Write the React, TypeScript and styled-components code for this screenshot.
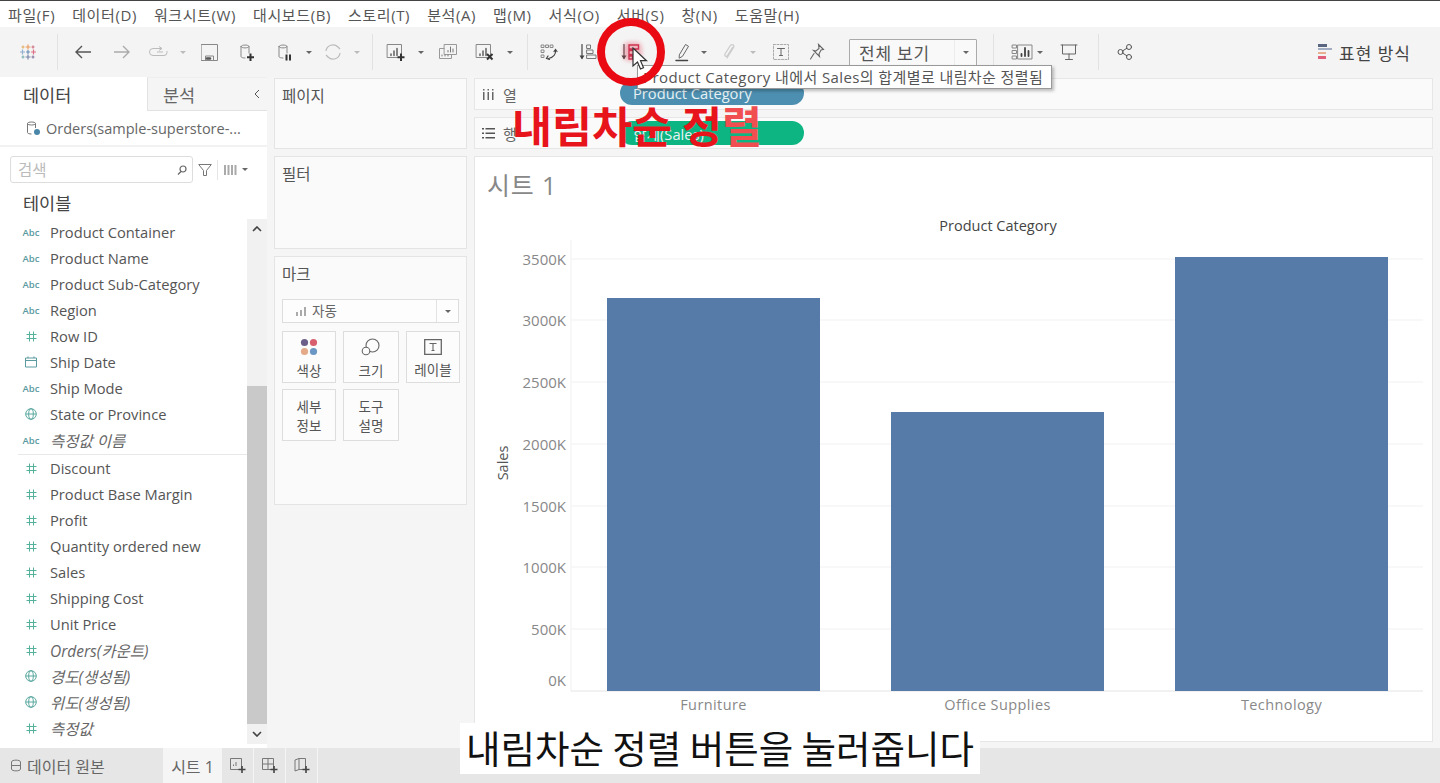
import React from "react";
import styled, { createGlobalStyle } from "styled-components";

const FONT = `"Open Sans", "Noto Sans CJK KR", sans-serif`;

const GlobalStyle = createGlobalStyle`
  html, body { margin: 0; padding: 0; background: #f5f5f5; }
  body { font-family: ${FONT}; color: #555; overflow: hidden; }
  * { box-sizing: border-box; }
`;

const Page = styled.div`
  position: relative;
  width: 1440px;
  height: 783px;
  display: flex;
  flex-direction: column;
  border-top: 1px solid #444;
  overflow: hidden;
`;

/* ---- menu + toolbar ---- */
const MenuBar = styled.div`
  height: 26px;
  background: #fff;
  display: flex;
  align-items: center;
  gap: 17px;
  padding-left: 8px;
  font-size: 15px;
  letter-spacing: 0.6px;
  color: #555;
`;

const Toolbar = styled.div`
  height: 50px;
  background: #f4f4f4;
  display: flex;
  align-items: center;
  padding-left: 8px;
`;

const Tool = styled.div<{ $w: number; $ml?: number }>`
  width: ${(p) => p.$w}px;
  margin-left: ${(p) => p.$ml ?? 0}px;
  flex: none;
  display: flex;
  align-items: center;
  justify-content: center;
`;

const ToolSep = styled.div<{ $ml: number; $mr: number }>`
  width: 1px;
  height: 36px;
  flex: none;
  background: #e2e2e2;
  margin: 0 ${(p) => p.$mr}px 0 ${(p) => p.$ml}px;
`;

const Caret = styled.span<{ $light?: boolean }>`
  width: 0;
  height: 0;
  border-left: 3px solid transparent;
  border-right: 3px solid transparent;
  border-top: 3px solid ${(p) => (p.$light ? "#bbb" : "#666")};
`;

const FitSelect = styled.div`
  width: 128px;
  height: 27px;
  margin-left: 21px;
  flex: none;
  border: 1px solid #aaa;
  border-radius: 1px;
  background: #f9f9f9;
  display: flex;
  align-items: center;
  font-size: 17px;
  letter-spacing: 0.8px;
  color: #555;
  padding-left: 9px;
`;

const FitCaret = styled.div`
  margin-left: auto;
  width: 22px;
  height: 100%;
  border-left: 1px solid #ececec;
  display: flex;
  align-items: center;
  justify-content: center;
`;

const ShowMe = styled.div`
  margin-left: auto;
  margin-right: 29px;
  display: flex;
  align-items: center;
  gap: 7px;
  font-size: 17px;
  letter-spacing: 1px;
  color: #444;
`;

/* ---- body ---- */
const Body = styled.div`
  flex: 1;
  min-height: 0;
  display: flex;
  background: #f5f5f5;
`;

const DataPane = styled.div`
  width: 267px;
  flex: none;
  background: #fff;
  display: flex;
  flex-direction: column;
`;

const PaneTabs = styled.div`
  height: 34px;
  flex: none;
  display: flex;
`;

const PaneTab = styled.div<{ $active?: boolean }>`
  width: ${(p) => (p.$active ? 147 : 120)}px;
  display: flex;
  align-items: center;
  font-size: 17.5px;
  color: ${(p) => (p.$active ? "#444" : "#666")};
  padding-left: ${(p) => (p.$active ? 23 : 15)}px;
  background: ${(p) => (p.$active ? "#fff" : "#f5f5f5")};
  border-bottom: ${(p) => (p.$active ? "none" : "1px solid #e2e2e2")};
  border-left: ${(p) => (p.$active ? "none" : "1px solid #e2e2e2")};
  border-top: ${(p) => (p.$active ? "none" : "1px solid #eee")};
  justify-content: space-between;
  padding-right: 7px;
`;

const SourceRow = styled.div`
  height: 36px;
  flex: none;
  display: flex;
  align-items: center;
  gap: 5px;
  padding-left: 26px;
  font-size: 14.5px;
  color: #666;
  border-bottom: 2px solid #f2f2f2;
`;

const SearchRow = styled.div`
  flex: none;
  display: flex;
  align-items: center;
  padding: 9px 0 0 10px;
`;

const SearchBox = styled.div`
  width: 183px;
  height: 27px;
  border: 1px solid #ddd;
  border-radius: 3px;
  display: flex;
  align-items: center;
  justify-content: space-between;
  padding: 0 5px 0 7px;
  font-size: 15.5px;
  color: #bbb;
`;

const SearchTools = styled.div`
  display: flex;
  align-items: center;
  margin-left: 5px;
  gap: 5px;
`;

const ThinSep = styled.div`
  width: 1px;
  height: 20px;
  background: #e5e5e5;
`;

const TablesTitle = styled.div`
  flex: none;
  height: 36px;
  display: flex;
  align-items: center;
  padding: 3px 0 0 23px;
  font-size: 17.5px;
  color: #444;
`;

const FieldArea = styled.div`
  flex: 1;
  min-height: 0;
  display: flex;
`;

const FieldList = styled.div`
  flex: 1;
`;

const FieldRow = styled.div<{ $divided?: boolean }>`
  position: relative;
  height: ${(p) => (p.$divided ? 28 : 26)}px;
  display: flex;
  align-items: center;
  padding-left: 24px;
  padding-bottom: ${(p) => (p.$divided ? 2 : 0)}px;
  font-size: 14.7px;
  color: #555;
  ${(p) =>
    p.$divided &&
    `&::after {
      content: "";
      position: absolute;
      left: 18px;
      right: 0;
      bottom: 0;
      height: 1px;
      background: #e8e8e8;
    }`}
`;

const FieldIcon = styled.span`
  width: 14px;
  margin-right: 12px;
  flex: none;
  display: flex;
  justify-content: center;
  font-size: 9.5px;
  font-weight: 600;
  color: #5b9aa0;
`;

const FieldName = styled.span<{ $italic?: boolean }>`
  font-style: ${(p) => (p.$italic ? "italic" : "normal")};
  font-size: ${(p) => (p.$italic ? "15.5px" : "inherit")};
  color: ${(p) => (p.$italic ? "#666" : "inherit")};
`;

const Scrollbar = styled.div`
  width: 20px;
  flex: none;
  height: 525px;
  background: #f1f1f1;
  display: flex;
  flex-direction: column;
  align-items: center;
`;

const ScrollThumb = styled.div`
  width: 100%;
  height: 340px;
  margin-top: 147px;
  background: #c9c9c9;
`;

const ScrollArrow = styled.div<{ $down?: boolean }>`
  height: 20px;
  flex: none;
  display: flex;
  align-items: center;
  justify-content: center;
  margin-top: ${(p) => (p.$down ? "auto" : "0")};
  transform: ${(p) => (p.$down ? "rotate(180deg)" : "none")};
`;

const CardColumn = styled.div`
  width: 193px;
  margin: 1px 0 0 7px;
  flex: none;
  display: flex;
  flex-direction: column;
  gap: 7px;
`;

const Card = styled.div<{ $h: number }>`
  height: ${(p) => p.$h}px;
  background: #fafafa;
  border: 1px solid #e4e4e4;
  padding: 6px 7px 0;
  font-size: 15.5px;
  line-height: 22px;
  color: #555;
`;

const MarkSelect = styled.div`
  margin-top: 14px;
  height: 24px;
  border: 1px solid #ddd;
  background: #fdfdfd;
  display: flex;
  align-items: center;
  font-size: 13.5px;
  color: #666;
  padding-left: 13px;
  gap: 6px;
`;

const MarkCaret = styled.div`
  margin-left: auto;
  width: 22px;
  height: 100%;
  border-left: 1px solid #e2e2e2;
  display: flex;
  align-items: center;
  justify-content: center;
`;

const MarkGrid = styled.div`
  margin-top: 8px;
  display: grid;
  grid-template-columns: 54px 56px 54px;
  grid-auto-rows: 52px;
  gap: 6px 7px;
`;

const MarkButton = styled.div`
  border: 1px solid #ddd;
  background: #fcfcfc;
  display: flex;
  flex-direction: column;
  align-items: center;
  justify-content: center;
  text-align: center;
  font-size: 13.5px;
  line-height: 19px;
  color: #555;
  gap: 6px;
  padding-top: 4px;
`;

const ViewColumn = styled.div`
  width: 959px;
  margin: 1px 0 0 7px;
  flex: none;
  display: flex;
  flex-direction: column;
  gap: 7px;
`;

const Shelf = styled.div`
  height: 32px;
  flex: none;
  background: #fafafa;
  border: 1px solid #e6e6e6;
  display: flex;
  align-items: center;
  font-size: 15px;
  color: #666;
`;

const ShelfLabel = styled.div`
  width: 145px;
  height: 100%;
  flex: none;
  padding-left: 7px;
  display: flex;
  align-items: center;
  gap: 8px;
`;

const Pill = styled.div<{ $color: string; $lift?: boolean }>`
  width: 184px;
  height: 24px;
  margin-top: ${(p) => (p.$lift ? "-2px" : "0")};
  border-radius: 12px;
  background: ${(p) => p.$color};
  color: #e8f2f5;
  font-size: 14.7px;
  display: flex;
  align-items: center;
  padding-left: 13px;
`;

const ViewCard = styled.div`
  flex: none;
  height: 586px;
  background: #fff;
  border: 1px solid #e6e6e6;
  padding: 13px 0 0 12px;
`;

const SheetTitle = styled.div`
  font-size: 25px;
  line-height: 30px;
  letter-spacing: 0.8px;
  color: #888;
`;

const ChartSvg = styled.svg`
  display: block;
  margin: 11px 0 0 -12px;
`;

/* ---- bottom tabs ---- */
const StatusBar = styled.div`
  height: 35px;
  flex: none;
  background: #e6e6e6;
  display: flex;
  align-items: stretch;
  font-size: 16px;
  color: #666;
`;

const SourceTab = styled.div`
  width: 163px;
  flex: none;
  display: flex;
  align-items: center;
  gap: 5px;
  padding-left: 10px;
`;

const SheetTab = styled.div`
  width: 59px;
  flex: none;
  background: #f5f5f5;
  display: flex;
  align-items: center;
  justify-content: center;
  font-size: 16px;
`;

const AddTab = styled.div`
  width: 32px;
  flex: none;
  border-right: 1px solid #f4f4f4;
  display: flex;
  align-items: center;
  justify-content: center;
`;

/* ---- things lying over the screen ---- */
const Tooltip = styled.div`
  position: absolute;
  left: 637px;
  top: 64px;
  width: 415px;
  height: 24px;
  background: #fff;
  border: 1px solid #999;
  box-shadow: 2px 2px 3px rgba(0, 0, 0, 0.25);
  font-size: 15px;
  letter-spacing: 0.4px;
  color: #555;
  white-space: nowrap;
  display: flex;
  align-items: center;
  padding: 0 0 2px 5px;
`;

const RedCircle = styled.div`
  position: absolute;
  left: 597px;
  top: 17px;
  width: 68px;
  height: 68px;
  border-radius: 50%;
  border: 8px solid #ea0a14;
`;

const Glow = styled.div`
  position: absolute;
  left: 623px;
  top: 41px;
  width: 19px;
  height: 19px;
  border-radius: 6px;
  background: rgba(225, 60, 90, 0.35);
  filter: blur(2px);
`;

const CursorSvg = styled.svg`
  position: absolute;
  left: 632px;
  top: 46px;
`;

const RedHeading = styled.div`
  position: absolute;
  left: 512px;
  top: 94px;
  font-family: "Noto Sans CJK KR", sans-serif;
  font-weight: 700;
  font-size: 43.5px;
  line-height: 60px;
  color: #e8141c;
  white-space: nowrap;
  span {
    color: #f04e50;
  }
`;

const Caption = styled.div`
  position: absolute;
  left: 460px;
  top: 722px;
  width: 520px;
  height: 51px;
  background: #fff;
  color: #111;
  font-family: "Noto Sans CJK KR", sans-serif;
  font-weight: 400;
  font-size: 37.5px;
  line-height: 48px;
  text-align: center;
  white-space: nowrap;
`;

/* ---- icons ---- */
const Ico = ({ w = 20, h = 20, children }: { w?: number; h?: number; children: React.ReactNode }) => (
  <svg width={w} height={h} viewBox={`0 0 ${w} ${h}`} fill="none" stroke="#666" strokeWidth="1" strokeLinecap="round">
    {children}
  </svg>
);

const TableauLogo = () => (
  <svg width="18" height="18" viewBox="0 0 18 18" strokeWidth="1.2" opacity="0.8">
    <path d="M9 1.5v5M6.5 4h5" stroke="#e8863a" />
    <path d="M9 11.5v5M6.5 14h5" stroke="#5a6b99" />
    <path d="M3.5 6.5v5M1 9h5" stroke="#7b9fc6" />
    <path d="M14.5 6.5v5M12 9h5" stroke="#d8506a" />
    <path d="M9 7v4M7 9h4" stroke="#4a7aa8" />
    <path d="M4 2.5v3M2.5 4h3" stroke="#e0a040" />
    <path d="M14 2.5v3M12.5 4h3" stroke="#c8506a" />
    <path d="M4 12.5v3M2.5 14h3" stroke="#5aa0a0" />
    <path d="M14 12.5v3M12.5 14h3" stroke="#6a5a90" />
  </svg>
);

const ArrowIcon = ({ dir, light }: { dir: "left" | "right"; light?: boolean }) => (
  <svg width="18" height="14" viewBox="0 0 18 14" fill="none" stroke={light ? "#aaa" : "#555"} strokeWidth="1.4">
    {dir === "left" ? <path d="M17 7H2M8 1L2 7l6 6" /> : <path d="M1 7h15M10 1l6 6-6 6" />}
  </svg>
);

const SaveIcon = () => (
  <Ico w={17} h={17}>
    <path d="M.5.5h16v16H.5zM4.5 16.5V12h8v4.5" stroke="#888" />
    <path d="M6 14.5h3" stroke="#555" strokeWidth="2.5" />
  </Ico>
);

const DbPlus = ({ pause }: { pause?: boolean }) => (
  <Ico w={18} h={20}>
    <path d="M2 4.5C2 2.5 10 2.5 10 4.5V11M2 4.5C2 6.5 10 6.5 10 4.5M2 4.5V14.5C2 15.5 4 16 6 16" stroke="#888" />
    {pause ? (
      <path d="M9.5 12.5v6M13 12.5v6" stroke="#333" strokeWidth="2" strokeLinecap="butt" />
    ) : (
      <path d="M11.5 11.500v7.500M8 15.200h7" stroke="#333" strokeWidth="2" strokeLinecap="butt" />
    )}
  </Ico>
);

const SheetIcon = ({ mark }: { mark?: "plus" | "x" }) => (
  <Ico w={20} h={20}>
    <path d="M1.5 2.5h14v13h-14z" stroke="#888" />
    <path d="M5 12v1.5M8 9v4.500M11 6.500v7" stroke="#555" strokeWidth="1.4" />
    {mark === "plus" && <path d="M15 11.500v7.500M11.500 15.200h7" stroke="#333" strokeWidth="2" strokeLinecap="butt" />}
    {mark === "x" && <path d="M12 12l5.500 5.500M17.500 12L12 17.500" stroke="#333" strokeWidth="2" strokeLinecap="butt" />}
  </Ico>
);

const DupSheetIcon = () => (
  <Ico w={20} h={18}>
    <path d="M6.500 1.500h12v10h-12z" stroke="#999" />
    <path d="M6 5.500H1.500v10h12V12" stroke="#999" />
    <path d="M10 9V7.500M12.500 9V4M15 9V6M4 13v-1M7 13v-1M10 13v-1" stroke="#777" />
  </Ico>
);

const SwapIcon = () => (
  <Ico w={18} h={18}>
    <path d="M1.500 2h2.500v2.500H1.500zM6 2h2.500v2.500H6zM10.500 2h2.500v2.500h-2.500zM1.500 7h2.500v2.500H1.500zM1.500 12h2.500v2.500H1.500z" stroke="#888" />
    <path d="M15.500 7c.5 4-2 7.500-7 8.500M8 13l-1.500 2.500 3 1M14 8.500l1.500-2 1.500 2" stroke="#444" strokeWidth="1.2" />
  </Ico>
);

const SortIcon = ({ desc }: { desc?: boolean }) => (
  <Ico w={20} h={18}>
    <path d="M4 1.500V15" stroke="#444" strokeWidth="1.2" />
    <path d="M1.500 12.500h5L4 16.500z" fill="#444" stroke="none" />
    {desc ? (
      <g stroke="#c22c48" strokeWidth="1.4">
        <path d="M9 2h9.500v4H9zM9 7.500h6.500v4H9zM9 13h3.500v3H9z" />
      </g>
    ) : (
      <path d="M9 2h3.500v3.500H9zM9 7h6v3.500H9zM9 12h9v3.500H9z" stroke="#777" />
    )}
  </Ico>
);

const PenIcon = () => (
  <Ico w={16} h={20}>
    <path d="M4.500 12.500l6-10 3 1.800-6 10L4.500 16z" stroke="#666" />
    <path d="M1 18.500h11.500" stroke="#444" strokeWidth="1.5" />
  </Ico>
);

const ClipIcon = () => (
  <Ico w={14} h={18}>
    <path d="M4 15L10.500 4.500c1.500-2.500-2-4-3.500-1.500L2 11c-1 2 1.500 3.500 2.500 1.500l5-8" stroke="#ccc" strokeWidth="1.3" />
  </Ico>
);

const TextIcon = () => (
  <Ico w={18} h={18}>
    <path d="M1.500 1.500h15v15h-15z" stroke="#aaa" strokeDasharray="2 1.5" />
    <path d="M5.500 5.500h7M9 5.500v7M7.500 12.500h3" stroke="#666" />
  </Ico>
);

const PinIcon = () => (
  <Ico w={16} h={18}>
    <path d="M9.500 1.500l5 5-2.500.5-2 4 .5 2.500-6-6 2.500.5 3-2.500zM5 10.500L1.500 16" stroke="#666" strokeWidth="1.1" />
  </Ico>
);

const SmallMultiples = () => (
  <Ico w={22} h={18}>
    <path d="M1.500 2h4v3h-4zM1.500 7.500h4v3h-4zM1.500 13h4v3h-4z" stroke="#888" />
    <path d="M7 2h14v14H7z" stroke="#888" />
    <path d="M10.500 13v-2M14 13V5M17.500 13V8" stroke="#444" strokeWidth="1.8" />
  </Ico>
);

const PresentIcon = () => (
  <Ico w={18} h={18}>
    <path d="M1 2h16M2.500 2v9h13V2M9 11v5M5.500 16.500h7" stroke="#666" />
  </Ico>
);

const ShareIcon = () => (
  <Ico w={16} h={16}>
    <circle cx="3.500" cy="8" r="2.500" stroke="#555" />
    <circle cx="12" cy="3" r="2.500" stroke="#555" />
    <circle cx="12" cy="13" r="2.500" stroke="#555" />
    <path d="M5.800 6.800l4-2.500M5.800 9.200l4 2.500" stroke="#555" />
  </Ico>
);

const ShowMeIcon = () => (
  <svg width="14" height="18" viewBox="0 0 14 18">
    <rect x="0" y="1" width="9" height="3" fill="#5a6680" />
    <rect x="0" y="5" width="14" height="2" fill="#a4aec2" />
    <rect x="0" y="9" width="8" height="2" fill="#e8b090" />
    <rect x="0" y="13" width="8" height="3" fill="#e0607a" />
  </svg>
);

const HashIcon = ({ color = "#55b09e" }: { color?: string }) => (
  <svg width="11" height="11" viewBox="0 0 11 11" fill="none" stroke={color} strokeWidth="1">
    <path d="M3.500.5v10M7.500.5v10M.5 3.500h10M.5 7.500h10" />
  </svg>
);

const GlobeIcon = () => (
  <svg width="12" height="12" viewBox="0 0 12 12" fill="none" stroke="#5aa8a0" strokeWidth="1">
    <circle cx="6" cy="6" r="5.300" />
    <ellipse cx="6" cy="6" rx="2.300" ry="5.300" />
    <path d="M.7 6h10.600" />
  </svg>
);

const CalendarIcon = () => (
  <svg width="12" height="12" viewBox="0 0 12 12" fill="none" stroke="#5b9aa0" strokeWidth="1">
    <path d="M.5 2h11v9h-11zM.5 4.500h11M3 .5V2M9 .5V2" />
  </svg>
);

const Chevron = () => (
  <svg width="10" height="6" viewBox="0 0 10 6" fill="none" stroke="#444" strokeWidth="1.6">
    <path d="M1 5l4-4 4 4" />
  </svg>
);

const MarkDots = () => (
  <svg width="18" height="18" viewBox="0 0 18 18">
    <circle cx="4.500" cy="4.500" r="3.600" fill="#6b5f8a" />
    <circle cx="13.500" cy="4.500" r="3.600" fill="#d8606e" />
    <circle cx="4.500" cy="13.500" r="3.600" fill="#e3a988" />
    <circle cx="13.500" cy="13.500" r="3.600" fill="#6a97c4" />
  </svg>
);

const MarkSize = () => (
  <svg width="20" height="18" viewBox="0 0 20 18" fill="none" stroke="#666" strokeWidth="1.1">
    <circle cx="11.500" cy="7.500" r="6.500" fill="#fcfcfc" />
    <circle cx="5" cy="13" r="3.800" fill="#fcfcfc" />
  </svg>
);

const MarkLabel = () => (
  <svg width="18" height="16" viewBox="0 0 18 16" fill="none" stroke="#666">
    <path d="M.7.700h16.600v14.600H.7z" strokeWidth="1.3" />
    <path d="M5.500 4.500h7M9 4.500v7M7.500 11.500h3" strokeWidth="1.1" />
  </svg>
);

function SheetAddIcon({ d }: { d: string }) {
  return (
    <svg width="18" height="18" viewBox="0 0 18 18" fill="none" stroke="#777">
      <path d={d} />
      <path d="M13 9v7M9.500 12.500h7" stroke="#444" strokeWidth="1.6" />
    </svg>
  );
}

type Field = { type: "abc" | "hash" | "date" | "globe"; name: string; italic?: boolean; divided?: boolean };

const fields: Field[] = [
  { type: "abc", name: "Product Container" },
  { type: "abc", name: "Product Name" },
  { type: "abc", name: "Product Sub-Category" },
  { type: "abc", name: "Region" },
  { type: "hash", name: "Row ID" },
  { type: "date", name: "Ship Date" },
  { type: "abc", name: "Ship Mode" },
  { type: "globe", name: "State or Province" },
  { type: "abc", name: "측정값 이름", italic: true, divided: true },
  { type: "hash", name: "Discount" },
  { type: "hash", name: "Product Base Margin" },
  { type: "hash", name: "Profit" },
  { type: "hash", name: "Quantity ordered new" },
  { type: "hash", name: "Sales" },
  { type: "hash", name: "Shipping Cost" },
  { type: "hash", name: "Unit Price" },
  { type: "hash", name: "Orders(카운트)", italic: true },
  { type: "globe", name: "경도(생성됨)", italic: true },
  { type: "globe", name: "위도(생성됨)", italic: true },
  { type: "hash", name: "측정값", italic: true },
];

const menus = ["파일(F)", "데이터(D)", "워크시트(W)", "대시보드(B)", "스토리(T)", "분석(A)", "맵(M)", "서식(O)", "서버(S)", "창(N)", "도움말(H)"];

const FieldGlyph = ({ type }: { type: Field["type"] }) => {
  if (type === "abc") return <>Abc</>;
  if (type === "hash") return <HashIcon />;
  if (type === "date") return <CalendarIcon />;
  return <GlobeIcon />;
};

// chart is drawn in page coordinates through the viewBox
const OX = 475;
const OY = 211;
const ticks = [
  { label: "3500K", y: 260 },
  { label: "3000K", y: 321 },
  { label: "2500K", y: 383 },
  { label: "2000K", y: 445 },
  { label: "1500K", y: 507 },
  { label: "1000K", y: 568 },
  { label: "500K", y: 630 },
];
const bars = [
  { name: "Furniture", x: 607, top: 298 },
  { name: "Office Supplies", x: 891, top: 412 },
  { name: "Technology", x: 1175, top: 257 },
];

const Chart = () => (
  <ChartSvg width="957" height="530" viewBox={`${OX} ${OY} 957 530`} fontFamily={FONT}>
    <text x="998" y="231" textAnchor="middle" fontSize="14.5" fontWeight="500" fill="#444">
      Product Category
    </text>
    {ticks.map((t) => (
      <g key={t.label}>
        <line x1="571" x2="1423" y1={t.y - 1} y2={t.y - 1} stroke="#f1f1f1" />
        <text x="566" y={t.y + 5} textAnchor="end" fontSize="15" fill="#888">
          {t.label}
        </text>
      </g>
    ))}
    <text x="566" y="686" textAnchor="end" fontSize="15" fill="#888">
      0K
    </text>
    <line x1="571" x2="571" y1="240" y2="691" stroke="#f1f1f1" />
    <line x1="571" x2="1423" y1="691" y2="691" stroke="#e4e4e4" />
    {bars.map((b) => (
      <g key={b.name}>
        <rect x={b.x} y={b.top} width="213" height={691 - b.top} fill="#567ba9" />
        <text x={b.x + 106.5} y="710" textAnchor="middle" fontSize="14.5" letterSpacing="0.4" fill="#888">
          {b.name}
        </text>
      </g>
    ))}
    <text transform="translate(508 463) rotate(-90)" textAnchor="middle" fontSize="14.5" fill="#555">
      Sales
    </text>
  </ChartSvg>
);

export default function App() {
  return (
    <>
      <GlobalStyle />
      <Page>
        <MenuBar>
          {menus.map((m) => (
            <span key={m}>{m}</span>
          ))}
        </MenuBar>
        <Toolbar>
          <Tool $w={40}><TableauLogo /></Tool>
          <ToolSep $ml={9} $mr={7} />
          <Tool $w={36}><ArrowIcon dir="left" /></Tool>
          <Tool $w={42}><ArrowIcon dir="right" light /></Tool>
          <Tool $w={32}>
            <svg width="20" height="12" viewBox="0 0 20 12" fill="none" stroke="#bbb">
              <path d="M12 2.500H4a3.500 3.500 0 0 0 0 7h11a3 3 0 0 0 3-3V5M8 6h6M10 0.500l3 2-3 2" />
            </svg>
          </Tool>
          <Tool $w={16}><Caret $light /></Tool>
          <Tool $w={36}><SaveIcon /></Tool>
          <Tool $w={42}><DbPlus /></Tool>
          <Tool $w={34}><DbPlus pause /></Tool>
          <Tool $w={12}><Caret /></Tool>
          <Tool $w={36}>
            <svg width="18" height="18" viewBox="0 0 18 18" fill="none" stroke="#bbb" strokeWidth="1.2">
              <path d="M2 8a7 7 0 0 1 12-4l2 2M16 10a7 7 0 0 1-12 4l-2-2" />
            </svg>
          </Tool>
          <Tool $w={12}><Caret $light /></Tool>
          <ToolSep $ml={9} $mr={7} />
          <Tool $w={32}><SheetIcon mark="plus" /></Tool>
          <Tool $w={18}><Caret /></Tool>
          <Tool $w={36}><DupSheetIcon /></Tool>
          <Tool $w={38}><SheetIcon mark="x" /></Tool>
          <Tool $w={12}><Caret /></Tool>
          <ToolSep $ml={11} $mr={8} />
          <Tool $w={26}><SwapIcon /></Tool>
          <Tool $w={52}><SortIcon /></Tool>
          <Tool $w={32}><SortIcon desc /></Tool>
          <Tool $w={30} $ml={22}><PenIcon /></Tool>
          <Tool $w={12}><Caret /></Tool>
          <Tool $w={40}><ClipIcon /></Tool>
          <Tool $w={6}><Caret $light /></Tool>
          <Tool $w={50}><TextIcon /></Tool>
          <Tool $w={22}><PinIcon /></Tool>
          <FitSelect>
            전체 보기
            <FitCaret><Caret /></FitCaret>
          </FitSelect>
          <ToolSep $ml={16} $mr={16} />
          <Tool $w={24}><SmallMultiples /></Tool>
          <Tool $w={12}><Caret /></Tool>
          <Tool $w={46}><PresentIcon /></Tool>
          <ToolSep $ml={6} $mr={17} />
          <Tool $w={18}><ShareIcon /></Tool>
          <ShowMe>
            <ShowMeIcon />
            표현 방식
          </ShowMe>
        </Toolbar>
        <Body>
          <DataPane>
            <PaneTabs>
              <PaneTab $active>데이터</PaneTab>
              <PaneTab>
                분석
                <svg width="6" height="10" viewBox="0 0 6 10" fill="none" stroke="#555">
                  <path d="M5 1L1 5l4 4" />
                </svg>
              </PaneTab>
            </PaneTabs>
            <SourceRow>
              <svg width="15" height="16" viewBox="0 0 15 16" fill="none" stroke="#777">
                <path d="M1.500 3.500C1.500 1.500 9.500 1.500 9.500 3.500V8M1.500 3.500c0 2 8 2 8 0M1.500 3.500v9c0 1 2 1.500 4 1.500" />
                <circle cx="11" cy="12" r="3" fill="#4a86a8" stroke="none" />
              </svg>
              Orders(sample-superstore-...
            </SourceRow>
            <SearchRow>
              <SearchBox>
                검색
                <svg width="10" height="10" viewBox="0 0 10 10" fill="none" stroke="#666" strokeWidth="1.2">
                  <circle cx="6" cy="4" r="3" />
                  <path d="M4 6.500L1 9.500" />
                </svg>
              </SearchBox>
              <SearchTools>
                <svg width="14" height="14" viewBox="0 0 14 14" fill="none" stroke="#777">
                  <path d="M.7 1.500h12.600L8.500 7.500V12.500H5.500V7.500z" />
                </svg>
                <ThinSep />
                <svg width="14" height="10" viewBox="0 0 14 10" fill="#aaa">
                  <path d="M1 0h2v10H1zM4.500 0h2v10h-2zM8 0h2v10H8zM11.500 0h2v10h-2z" />
                </svg>
                <Caret />
              </SearchTools>
            </SearchRow>
            <TablesTitle>테이블</TablesTitle>
            <FieldArea>
              <FieldList>
                {fields.map((f) => (
                  <FieldRow key={f.name} $divided={f.divided}>
                    <FieldIcon>
                      <FieldGlyph type={f.type} />
                    </FieldIcon>
                    <FieldName $italic={f.italic}>{f.name}</FieldName>
                  </FieldRow>
                ))}
              </FieldList>
              <Scrollbar>
                <ScrollArrow><Chevron /></ScrollArrow>
                <ScrollThumb />
                <ScrollArrow $down><Chevron /></ScrollArrow>
              </Scrollbar>
            </FieldArea>
          </DataPane>
          <CardColumn>
            <Card $h={71}>페이지</Card>
            <Card $h={93}>필터</Card>
            <Card $h={249}>
              마크
              <MarkSelect>
                <svg width="10" height="9" viewBox="0 0 10 9" fill="#aaa">
                  <path d="M0 5h2v4H0zM4 3h2v6H4zM8 0h2v9H8z" />
                </svg>
                자동
                <MarkCaret><Caret /></MarkCaret>
              </MarkSelect>
              <MarkGrid>
                <MarkButton><MarkDots />색상</MarkButton>
                <MarkButton><MarkSize />크기</MarkButton>
                <MarkButton><MarkLabel />레이블</MarkButton>
                <MarkButton>세부<br />정보</MarkButton>
                <MarkButton>도구<br />설명</MarkButton>
              </MarkGrid>
            </Card>
          </CardColumn>
          <ViewColumn>
            <Shelf>
              <ShelfLabel>
                <svg width="13" height="11" viewBox="0 0 13 11" fill="#666">
                  <path d="M1 3h1.500v8H1zM1 0h1.500v1.500H1zM5.500 3H7v8H5.500zM5.500 0H7v1.500H5.500zM10 3h1.500v8H10zM10 0h1.500v1.500H10z" />
                </svg>
                열
              </ShelfLabel>
              <Pill $color="#4d8fb0" $lift>Product Category</Pill>
            </Shelf>
            <Shelf>
              <ShelfLabel>
                <svg width="13" height="11" viewBox="0 0 13 11" fill="#555">
                  <path d="M0 0h2v1.500H0zM3.500 0H13v1.500H3.500zM0 4.500h2V6H0zM3.500 4.500H13V6H3.500zM0 9h2v1.500H0zM3.500 9H13v1.500H3.500z" />
                </svg>
                행
              </ShelfLabel>
              <Pill $color="#0db582">합계(Sales)</Pill>
            </Shelf>
            <ViewCard>
              <SheetTitle>시트 1</SheetTitle>
              <Chart />
            </ViewCard>
          </ViewColumn>
        </Body>
        <StatusBar>
          <SourceTab>
            <svg width="12" height="13" viewBox="0 0 12 13" fill="none" stroke="#777">
              <path d="M1.500 3c0-2.500 9-2.500 9 0v7c0 2.500-9 2.500-9 0zM1.500 6.500h9" />
            </svg>
            데이터 원본
          </SourceTab>
          <SheetTab>시트 1</SheetTab>
          <AddTab><SheetAddIcon d="M1.500 1.500h11v11h-11zM4.500 9V7.500M7 9V5" /></AddTab>
          <AddTab><SheetAddIcon d="M1.500 1.500h11v11h-11zM1.500 7h11M7 1.500v11" /></AddTab>
          <AddTab><SheetAddIcon d="M2 3l4-1.500v11L2 14zM6 1.500h6.500v11H6" /></AddTab>
        </StatusBar>

        <Glow />
        <RedHeading>내림차순 정<span>렬</span></RedHeading>
        <Tooltip>Product Category 내에서 Sales의 합계별로 내림차순 정렬됨</Tooltip>
        <RedCircle />
        <CursorSvg width="16" height="24" viewBox="0 0 16 24">
          <path d="M1 1v18l4.500-4 3 7 3-1.300-3-7h6z" fill="#fff" stroke="#333" strokeWidth="1.2" />
        </CursorSvg>
        <Caption>내림차순 정렬 버튼을 눌러줍니다</Caption>
      </Page>
    </>
  );
}
